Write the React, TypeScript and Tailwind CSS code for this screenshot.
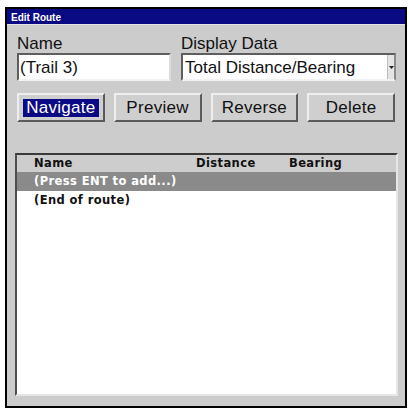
const sans = { fontFamily: '"Liberation Sans", Arial, sans-serif' };

const ListHeader = () => (
  <div className="flex h-[17px] items-center bg-[#cdcdcd] pl-[17px] text-[11.5px] font-bold tracking-[0.4px] text-[#111]">
    <span className="w-[162px]">Name</span>
    <span className="w-[93px]">Distance</span>
    <span>Bearing</span>
  </div>
);

const Btn = ({ label, active }: { label: string; active?: boolean }) => (
  <button className="flex h-[29px] w-[88px] items-center justify-center border-2 border-t-[#eeeeee] border-l-[#eeeeee] border-r-[#5a5a5a] border-b-[#5a5a5a] bg-[#cfcfcf] text-[17px] tracking-[0.3px] text-[#111]">
    {active ? (
      <span className="flex h-[18px] items-center bg-[#0a0a86] px-[3px] text-white">{label}</span>
    ) : (
      label
    )}
  </button>
);

export default function App() {
  return (
    <div className="h-[409px] w-[409px] bg-white pl-[5px] pt-[7px]" style={sans}>
      <div className="flex h-[401px] w-[402px] flex-col border-2 border-black bg-[#cccccc]">
        {/* Title bar */}
        <div className="h-[16px] border-b border-[#e4e4e4] bg-[#0a0a84] pl-[4px] pt-[3px] text-[10px] font-bold leading-[12px] text-white">
          Edit Route
        </div>

        <div className="flex flex-1 flex-col px-[8px] pt-[9px]">
          {/* Name / Display Data */}
          <div className="grid grid-cols-[154px_215px] gap-x-[10px] px-[2px] text-[17px] leading-[19px] text-[#111]">
            <span>Name</span>
            <span>Display Data</span>
            <div className="flex h-[28px] items-center border-2 border-t-[#5e5e5e] border-l-[#5e5e5e] border-r-[#dcdcdc] border-b-[#f2f2f2] bg-white pl-[1px]">
              (Trail 3)
            </div>
            <div className="flex h-[28px] items-center border-2 border-t-[#5e5e5e] border-l-[#5e5e5e] border-r-[#8a8a8a] border-b-[#f2f2f2] bg-white pl-[2px]">
              <span className="flex-1">Total Distance/Bearing</span>
              <span className="flex h-full w-[7px] items-center justify-center border-l border-[#bdbdbd] bg-[#e4e4e4]">
                <svg width="5" height="3" viewBox="0 0 5 3">
                  <path d="M0 0h5L2.5 3z" fill="#222" />
                </svg>
              </span>
            </div>
          </div>

          {/* Buttons */}
          <div className="mt-[12px] flex gap-[9px] px-[2px]">
            <Btn label="Navigate" active />
            <Btn label="Preview" />
            <Btn label="Reverse" />
            <Btn label="Delete" />
          </div>

          {/* Route list */}
          <div
            className="mt-[31px] flex h-[243px] w-[383px] flex-col border-2 border-t-[#3a3a3a] border-l-[#4e4e4e] border-r-[#e6e6e6] border-b-[#e6e6e6] bg-white"
            style={{ fontFamily: '"DejaVu Sans", Verdana, sans-serif' }}
          >
            <ListHeader />
            <div className="flex h-[19px] items-center bg-[#8a8a8a] pl-[17px] text-[11.5px] font-bold tracking-[0.4px] text-white">
              (Press ENT to add...)
            </div>
            <div className="flex h-[19px] items-center pl-[17px] text-[11.5px] font-bold tracking-[0.4px] text-[#111]">
              (End of route)
            </div>
          </div>
        </div>
      </div>
    </div>
  );
}
